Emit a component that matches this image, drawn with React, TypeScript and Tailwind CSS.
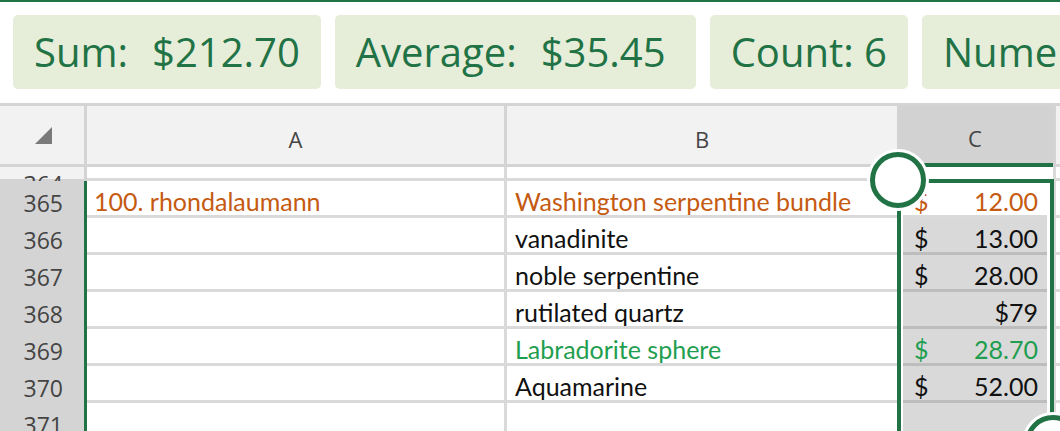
import React from 'react';

const GREEN = 'border-[#217346]';

type Cell = { text?: string; color?: string };
type RowData = {
  num: string;
  a?: Cell;
  b?: Cell;
  c?: { sign?: boolean; value: string; color?: string };
};

const rows: RowData[] = [
  { num: '365', a: { text: '100. rhondalaumann', color: 'text-[#c55a11]' }, b: { text: 'Washington serpentine bundle', color: 'text-[#c55a11]' }, c: { sign: true, value: '12.00', color: 'text-[#c55a11]' } },
  { num: '366', b: { text: 'vanadinite' }, c: { sign: true, value: '13.00' } },
  { num: '367', b: { text: 'noble serpentine' }, c: { sign: true, value: '28.00' } },
  { num: '368', b: { text: 'rutilated quartz' }, c: { value: '$79' } },
  { num: '369', b: { text: 'Labradorite sphere', color: 'text-[#1f9e50]' }, c: { sign: true, value: '28.70', color: 'text-[#1f9e50]' } },
  { num: '370', b: { text: 'Aquamarine' }, c: { sign: true, value: '52.00' } },
];

const cellFont = "font-['Lato',sans-serif] text-[25px] leading-[30px]";
const numFont = "font-['Open_Sans',sans-serif] text-[23px] leading-[30px] text-[#444]";
const headFont = "font-['Open_Sans',sans-serif] text-[22px] text-[#444] pt-[8px]";

const Chip = ({ children, wide }: { children: React.ReactNode; wide?: boolean }) => (
  <div
    className={`flex h-[74px] shrink-0 items-center gap-[24px] whitespace-nowrap rounded-[5px] bg-[#e6edd9] pl-[21px] font-['Open_Sans',sans-serif] text-[40px] text-[#217346] ${
      wide ? 'pr-[30px]' : 'pr-[21px]'
    }`}
  >
    {children}
  </div>
);

const DataRow = ({ row, first }: { row: RowData; first?: boolean }) => (
  <div className="flex h-[37px] shrink-0">
    <div className="flex w-[84px] shrink-0 items-center justify-end bg-[#d4d4d4] pr-[21px] pt-[6px]">
      <span className={numFont}>{row.num}</span>
    </div>
    <div className="w-[3px] shrink-0 bg-[#217346]" />
    <div className="flex w-[417px] shrink-0 items-center border-b-[3px] border-[#dadada] pl-[7px] pt-[6px]">
      <span className={`${cellFont} ${row.a?.color ?? 'text-[#111]'}`}>{row.a?.text}</span>
    </div>
    <div className="w-[3px] shrink-0 bg-[#dadada]" />
    <div className="flex w-[390px] shrink-0 items-center border-b-[3px] border-[#dadada] pl-[8px] pt-[6px]">
      <span className={`${cellFont} whitespace-nowrap ${row.b?.color ?? 'text-[#111]'}`}>{row.b?.text}</span>
    </div>
    <div className="w-[156px] shrink-0 px-[6px]">
      <div
        className={`flex h-full items-center justify-between border-b-[3px] pl-[11px] pr-[9px] pt-[6px] ${
          first ? 'border-[#dadada] bg-white' : 'border-[#bdbdbd] bg-[#d9d9d9]'
        } ${cellFont} ${row.c?.color ?? 'text-[#111]'}`}
      >
        <span>{row.c?.sign ? '$' : ''}</span>
        <span>{row.c?.value}</span>
      </div>
    </div>
    <div className="w-[3px] shrink-0 bg-[#dadada]" />
    <div className="flex-1 border-b-[3px] border-[#dadada]" />
  </div>
);

const App = () => {
  return (
    <div className="relative h-[431px] w-[1060px] overflow-hidden bg-white">
      {/* status chips */}
      <div className="h-[103px] border-t-2 border-[#217346] pt-[13px] pl-[13px]">
        <div className="flex gap-[14px]">
          <Chip>
            <span>Sum:</span>
            <span>$212.70</span>
          </Chip>
          <Chip wide>
            <span>Average:</span>
            <span>$35.45</span>
          </Chip>
          <Chip>
            <span>Count: 6</span>
          </Chip>
          <Chip>
            <span>Numerical Count: 6</span>
          </Chip>
        </div>
      </div>

      {/* column headers */}
      <div className="flex h-[64px] border-t-[3px] border-[#d4d4d4] bg-[#f2f2f2]">
        <div className="flex w-[84px] shrink-0 items-center justify-center border-b-[3px] border-[#d4d4d4] pt-[2px]">
          <svg width="18" height="18" viewBox="0 0 18 18" className="ml-[4px]">
            <polygon points="17,0 17,17 0,17" fill="#7a7a7a" />
          </svg>
        </div>
        <div className="w-[3px] shrink-0 bg-[#d4d4d4]" />
        <div className={`flex w-[417px] shrink-0 items-center justify-center border-b-[3px] border-[#d4d4d4] ${headFont}`}>
          A
        </div>
        <div className="w-[3px] shrink-0 bg-[#d4d4d4]" />
        <div className={`flex w-[390px] shrink-0 items-center justify-center border-b-[3px] border-[#d4d4d4] ${headFont}`}>
          B
        </div>
        <div className={`flex w-[156px] shrink-0 items-center justify-center border-b-4 border-[#217346] bg-[#d2d2d2] ${headFont}`}>
          C
        </div>
        <div className="w-[3px] shrink-0 bg-[#d4d4d4]" />
        <div className="flex-1 border-b-[3px] border-[#d4d4d4]" />
      </div>

      {/* row 364, mostly scrolled off */}
      <div className="flex h-[14px] overflow-hidden">
        <div className="flex w-[84px] shrink-0 items-end justify-end border-b-2 border-[#d4d4d4] bg-[#f2f2f2] pr-[21px]">
          <span className={`${numFont} -mb-[20px]`}>364</span>
        </div>
        <div className="w-[3px] shrink-0 bg-[#d4d4d4]" />
        <div className="w-[417px] shrink-0 border-b-[3px] border-[#dadada]" />
        <div className="w-[3px] shrink-0 bg-[#dadada]" />
        <div className="w-[390px] shrink-0 border-b-[3px] border-[#dadada]" />
        <div className="w-[156px] shrink-0" />
        <div className="w-[3px] shrink-0 bg-[#dadada]" />
        <div className="flex-1 border-b-[3px] border-[#dadada]" />
      </div>

      {rows.map((r, i) => (
        <DataRow key={r.num} row={r} first={i === 0} />
      ))}

      {/* row 371, partly visible */}
      <div className="flex h-[37px]">
        <div className="flex w-[84px] shrink-0 items-start justify-end bg-[#d4d4d4] pr-[21px] pt-[7px]">
          <span className={numFont}>371</span>
        </div>
        <div className="w-[3px] shrink-0 bg-[#217346]" />
        <div className="w-[417px] shrink-0" />
        <div className="w-[3px] shrink-0 bg-[#dadada]" />
        <div className="w-[390px] shrink-0" />
        <div className="w-[156px] shrink-0 px-[6px]">
          <div className="h-full bg-[#d9d9d9]" />
        </div>
        <div className="w-[3px] shrink-0 bg-[#dadada]" />
        <div className="flex-1" />
      </div>

      {/* selection outline and handles */}
      <div className={`absolute left-[897px] top-[179px] h-[300px] w-[157px] border-4 ${GREEN}`} />
      <div className={`absolute left-[870px] top-[152px] h-[56px] w-[56px] rounded-full border-[5px] ${GREEN} bg-white ring-[3px] ring-white`} />
      <div className={`absolute left-[1025px] top-[415px] h-[56px] w-[56px] rounded-full border-[5px] ${GREEN} bg-white ring-[3px] ring-white`} />
    </div>
  );
};

export default App;
